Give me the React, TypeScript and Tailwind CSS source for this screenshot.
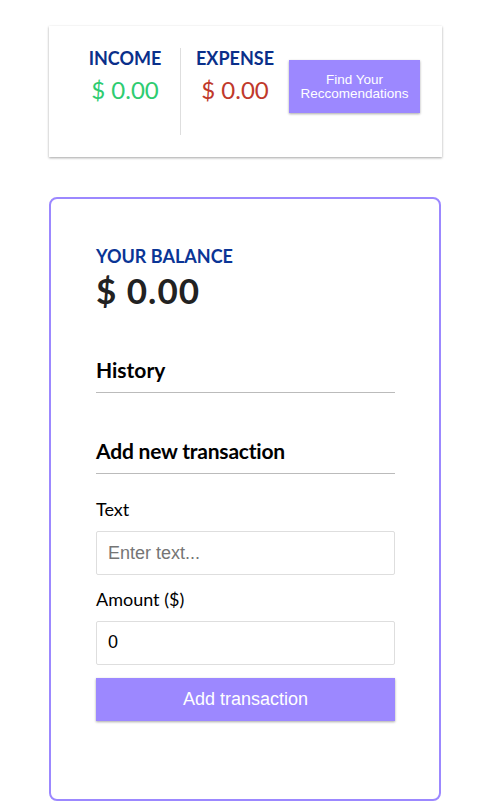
import React from "react";

const lato = "font-['Lato','Open_Sans',sans-serif]";
const arial = "font-['Liberation_Sans',Arial,sans-serif]";

export default function App() {
  return (
    <div className={`min-h-[811px] bg-white ${lato} text-[#111]`}>
      <div className="ml-[49px] w-[393px] pt-[26px]">
        {/* Top card */}
        <div className="flex bg-white pl-[21px] pr-[22px] py-[22px] shadow-[0_1px_3px_rgba(0,0,0,0.14),0_1px_2px_rgba(0,0,0,0.24)]">
          <div className="w-[110px] flex flex-col items-center">
            <h4 className="text-[18px] leading-[21.6px] font-bold uppercase text-[#0a2f8a] mt-0">Income</h4>
            <p className="mt-[6px] text-[24px] leading-[28px] text-[#2ecc71]">$ 0.00</p>
          </div>
          <div className="w-px h-[87px] bg-[#dedede]" />
          <div className="w-[108px] flex flex-col items-center">
            <h4 className="text-[18px] leading-[21.6px] font-bold uppercase text-[#0a2f8a]">Expense</h4>
            <p className="mt-[6px] text-[24px] leading-[28px] text-[#c0392b]">$ 0.00</p>
          </div>
          <button
            className={`${arial} mt-[12px] w-[131px] h-[53px] bg-[#9c88ff] text-white text-[13.5px] leading-[14px] shadow-[0_1px_3px_rgba(0,0,0,0.12),0_1px_2px_rgba(0,0,0,0.24)]`}
          >
            Find Your
            <br />
            Reccomendations
          </button>
        </div>

        {/* Main card */}
        <div className="mt-[40px] w-[392px] h-[604px] border-2 border-[#9c88ff] rounded-[8px] pl-[45px] pr-[44px] pt-[47px]">
          <h4 className="text-[18px] leading-[21.6px] font-bold uppercase text-[#0a3596]">Your Balance</h4>
          <h1 className="mt-[1px] text-[35px] leading-[43px] font-bold tracking-[1px] text-[#222]">$ 0.00</h1>

          <h3 className="mt-[45px] text-[21px] leading-[25px] font-bold text-black border-b border-[#bbb] pb-[10px]">History</h3>
          <ul className="m-0 p-0" />

          <h3 className="mt-[45px] text-[21px] leading-[25px] font-bold tracking-[-0.2px] text-black border-b border-[#bbb] pb-[10px]">Add new transaction</h3>

          <form className="mt-[25px]">
            <label className="block text-[18px] leading-[21.6px] text-black">Text</label>
            <input
              type="text"
              placeholder="Enter text..."
              className={`${arial} mt-[11px] block w-full h-[44px] border border-[#dedede] rounded-[2px] px-[11px] text-[18px] text-black placeholder:text-[#757575] outline-none`}
            />
            <label className="mt-[14px] block text-[18px] leading-[21.6px] text-black">Amount ($)</label>
            <input
              type="number"
              defaultValue={0}
              className={`${arial} mt-[10px] block w-full h-[44px] border border-[#dedede] rounded-[2px] px-[11px] text-[18px] text-black outline-none [appearance:textfield] [&::-webkit-inner-spin-button]:appearance-none`}
            />
            <button
              type="button"
              className={`${arial} mt-[13px] block w-full h-[43px] bg-[#9c88ff] text-white text-[18px] shadow-[0_1px_3px_rgba(0,0,0,0.12),0_1px_2px_rgba(0,0,0,0.24)]`}
            >
              Add transaction
            </button>
          </form>
        </div>
      </div>
    </div>
  );
}
